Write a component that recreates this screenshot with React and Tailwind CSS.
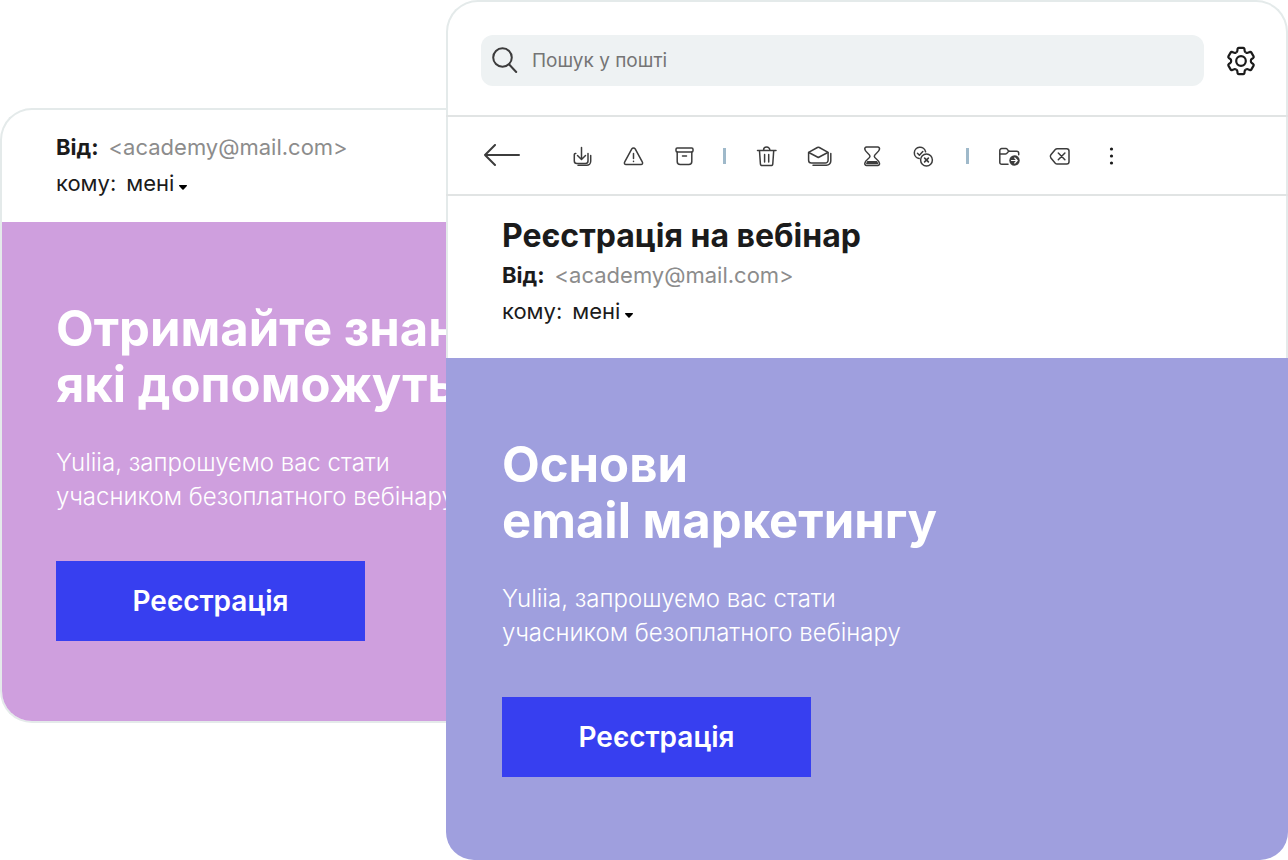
const Icon = ({ size = 'size-6', viewBox = '0 0 24 24', children }) => (
  <svg
    className={size}
    viewBox={viewBox}
    fill="none"
    stroke="currentColor"
    strokeWidth={1.5}
    strokeLinecap="round"
    strokeLinejoin="round"
    aria-hidden="true"
  >
    {children}
  </svg>
);

const firstGroup = [
  {
    label: 'Завантажити',
    icon: (
      <Icon>
        <path d="M11.5 3.500V15M7.500 11.500l4 4 4-4" />
        <path d="M5.800 9.500h-.5a1 1 0 0 0-1 1V17a2.500 2.500 0 0 0 2.500 2.500h8.700a2.500 2.500 0 0 0 2.500-2.500V9.500" />
        <path d="M8 21.300h8.700a4 4 0 0 0 4-4v-5.800" />
      </Icon>
    ),
  },
  {
    label: 'Спам',
    icon: (
      <Icon>
        <path d="M10.800 4.900 3.600 18.200a1.600 1.600 0 0 0 1.400 2.400h15a1.600 1.600 0 0 0 1.400-2.400L14.200 4.900a2 2 0 0 0-3.400 0z" />
        <path d="M12.500 9.500v5M12.500 17.300v.3" />
      </Icon>
    ),
  },
  {
    label: 'Архівувати',
    icon: (
      <Icon>
        <rect x="4" y="4" width="17" height="4" rx="1.200" />
        <path d="M5.200 8v9.500a3 3 0 0 0 3 3h8.600a3 3 0 0 0 3-3V8M10.500 12h4" />
      </Icon>
    ),
  },
];

const secondGroup = [
  {
    label: 'Видалити',
    icon: (
      <Icon>
        <path d="M3.500 6.500H22M9.500 6.300a3.200 3.200 0 0 1 6.400 0" />
        <path d="m5.500 6.800.9 12.900a2 2 0 0 0 2 1.900h8.400a2 2 0 0 0 2-1.900l.9-12.900M10.600 10.500v7.500M14.700 10.500v7.500" />
      </Icon>
    ),
  },
  {
    label: 'Позначити як прочитане',
    icon: (
      <Icon size="h-6 w-7" viewBox="0 0 28 24">
        <path d="m3.600 8.300 8.800-4.800a2 2 0 0 1 1.900 0l8.800 4.800v8a2.800 2.800 0 0 1-2.800 2.800H6.400a2.800 2.800 0 0 1-2.800-2.800z" />
        <path d="m3.800 8.500 9.500 5 9.500-5" />
        <path d="M8 21.300h13.500a4.300 4.300 0 0 0 4.300-4.300V9.500" />
      </Icon>
    ),
  },
  {
    label: 'Відкласти',
    icon: (
      <Icon>
        <path d="M6.500 3h11.300a1.800 1.800 0 0 1 1.700 2.200c-.5 3.300-5.200 4.800-5.200 7.100s4.700 3.300 5.200 7a1.800 1.800 0 0 1-1.700 2.200H6.500a1.800 1.800 0 0 1-1.700-2.200c.5-3.700 5.200-4.700 5.200-7S5.300 8.500 4.800 5.200A1.800 1.800 0 0 1 6.500 3z" />
        <path d="M7.700 17.700h8.900l.9 1.800H6.800z" fill="currentColor" />
      </Icon>
    ),
  },
  {
    label: 'Додати до завдань',
    icon: (
      <Icon>
        <circle cx="15.500" cy="16" r="5.900" />
        <path d="M8.200 14.600a5.700 5.700 0 1 1 6.400-6.800" />
        <path d="m6.500 9.300 1.900 1.900 3.400-3.700" />
        <path d="m13.600 14.100 3.800 3.800M17.400 14.100l-3.800 3.800" strokeWidth="1.600" />
      </Icon>
    ),
  },
];

const thirdGroup = [
  {
    label: 'Перемістити',
    icon: (
      <Icon>
        <path d="M11 20.300H4.700a1.900 1.900 0 0 1-1.900-1.900V6.500a1.900 1.900 0 0 1 1.900-1.900h4.500c1.500 0 1.500 2.700 3 2.700h7.500a2 2 0 0 1 2 2v1.500" />
        <path d="M3 10h5.500c2 0 2-2.700 3.700-2.700" />
        <circle cx="17.500" cy="16.500" r="5.200" fill="currentColor" stroke="none" />
        <path d="M14.500 16.500h5.500M17.800 14l2.400 2.500-2.400 2.500" stroke="white" strokeWidth="1.200" />
      </Icon>
    ),
  },
  {
    label: 'Очистити',
    icon: (
      <Icon>
        <path d="M9.200 4.800h9.500a2.300 2.300 0 0 1 2.300 2.300v10.600a2.300 2.300 0 0 1-2.300 2.300H9.200a2.500 2.500 0 0 1-1.900-.8l-4.400-5.300a2.400 2.400 0 0 1 0-3.100l4.400-5.200a2.500 2.500 0 0 1 1.900-.8z" />
        <path d="m10.300 9 6.600 6.800M16.900 9l-6.600 6.800" />
      </Icon>
    ),
  },
  {
    label: 'Більше',
    icon: (
      <Icon>
        <g fill="#1b1b1b" stroke="none">
          <circle cx="12.500" cy="5" r="1.600" />
          <circle cx="12.500" cy="12" r="1.600" />
          <circle cx="12.500" cy="19" r="1.600" />
        </g>
      </Icon>
    ),
  },
];

const GEAR_ANGLES = [0, 60, 120, 180, 240, 300];

const GearIcon = () => (
  <svg className="size-[30px]" viewBox="-15 -15 30 30" fill="none" stroke="currentColor" strokeWidth={2.2} strokeLinejoin="round" aria-hidden="true">
    <circle r="4.800" />
    {GEAR_ANGLES.map((angle) => (
      <path
        key={angle}
        transform={`rotate(${angle})`}
        d="M-4.900-8.500Q-3.600-9.200-3.600-10.600L-3.400-12.300Q-3.200-13.200-2.300-13.200H2.300Q3.200-13.200 3.400-12.300L3.600-10.600Q3.600-9.200 4.900-8.500"
      />
    ))}
  </svg>
);

const ToolGroup = ({ items, className = '' }) => (
  <div className={`flex items-center gap-[27px] ${className}`}>
    {items.map((item) => (
      <button key={item.label} type="button" aria-label={item.label}>
        {item.icon}
      </button>
    ))}
  </div>
);

const Separator = () => <div className="mx-[27px] h-4 w-[3px] bg-[#9fb9ca]" />;

const Sender = () => (
  <div className="text-[22px] leading-9 text-[#1b1b1b]">
    <p className="flex gap-2.5">
      <b className="font-bold">Від:</b>
      <span className="text-[#8c8c8c]">&lt;academy@mail.com&gt;</span>
    </p>
    <div className="flex items-center gap-2.5">
      <span>кому:</span>
      <button type="button" className="flex items-center gap-1">
        мені
        <svg className="mt-2 h-[5px] w-[10px]" viewBox="0 0 10 5" aria-hidden="true">
          <path d="M1.500 0h7a.6.600 0 0 1 .4 1L5.600 4.400a.9.900 0 0 1-1.200 0L1.100 1a.6.600 0 0 1 .4-1z" />
        </svg>
      </button>
    </div>
  </div>
);

const Promo = ({ title, className }) => (
  <section className={`pt-[79px] text-white ${className}`}>
    <h2 className="text-[49px] leading-14 font-bold">
      {title[0]}
      <br />
      {title[1]}
    </h2>
    <p className="mt-[33px] text-2xl leading-[34px] font-light">
      Yuliia, запрошуємо вас стати
      <br />
      учасником безоплатного вебінару
    </p>
    <button type="button" className="mt-[47px] h-20 w-[309px] bg-[#373ff0] text-[28px] font-semibold">
      Реєстрація
    </button>
  </section>
);

const App = () => {
  return (
    <main className="flex items-start bg-white font-['Inter','Liberation_Sans',sans-serif] whitespace-nowrap">
      <article className="mt-27 w-[446px] shrink-0 overflow-hidden rounded-l-[32px] border-y-2 border-l-2 border-[#e4eaea]">
        <header className="pt-[19px] pb-[21px] pl-[54px]">
          <Sender />
        </header>
        <Promo title={['Отримайте знання', 'які допоможуть']} className="bg-[#cf9fde] pb-20 pl-[54px]" />
      </article>

      <article className="min-w-0 flex-1">
        <div className="rounded-t-[32px] border-x-2 border-t-2 border-[#e4eaea]">
          <div className="flex items-center gap-[22px] pt-[33px] pr-[30px] pb-[29px] pl-[33px]">
            <label className="flex h-[51px] flex-1 items-center gap-[14px] rounded-xl bg-[#eef2f3] pl-[10px] text-[#3c3c3c]">
              <svg className="size-[27px]" viewBox="0 0 27 27" fill="none" stroke="currentColor" strokeWidth={2} strokeLinecap="round" aria-hidden="true">
                <circle cx="11.500" cy="10.500" r="9.300" />
                <path d="m18.200 17.500 7 7.500" />
              </svg>
              <input
                type="search"
                aria-label="Пошук у пошті"
                placeholder="Пошук у пошті"
                className="flex-1 bg-transparent pt-0.5 text-[19px] outline-none placeholder:text-[#757575]"
              />
            </label>
            <button type="button" aria-label="Налаштування" className="text-[#1b1b1b]">
              <GearIcon />
            </button>
          </div>

          <nav className="-mx-0.5 flex h-[81px] items-center border-y-2 border-[#e1e4e4] pl-[37px] text-[#3c3c3c]">
            <button type="button" aria-label="Назад" className="mr-[49px]">
              <svg className="h-6 w-[38px]" viewBox="0 0 38 24" fill="none" stroke="currentColor" strokeWidth={2} strokeLinecap="round" strokeLinejoin="round" aria-hidden="true">
                <path d="M36 11H2M12 1 2 11l10 10" />
              </svg>
            </button>
            <ToolGroup items={firstGroup} />
            <Separator />
            <ToolGroup items={secondGroup} className="pr-1 pl-px" />
            <Separator />
            <ToolGroup items={thirdGroup} className="pl-px" />
          </nav>

          <header className="pt-[19px] pb-[29px] pl-[54px]">
            <h1 className="text-[32px] leading-[42px] font-bold text-[#1b1b1b]">Реєстрація на вебінар</h1>
            <Sender />
          </header>
        </div>
        <Promo title={['Основи', 'email маркетингу']} className="rounded-b-[28px] bg-[#9f9fde] pb-[83px] pl-14" />
      </article>
    </main>
  );
};

export default App;
